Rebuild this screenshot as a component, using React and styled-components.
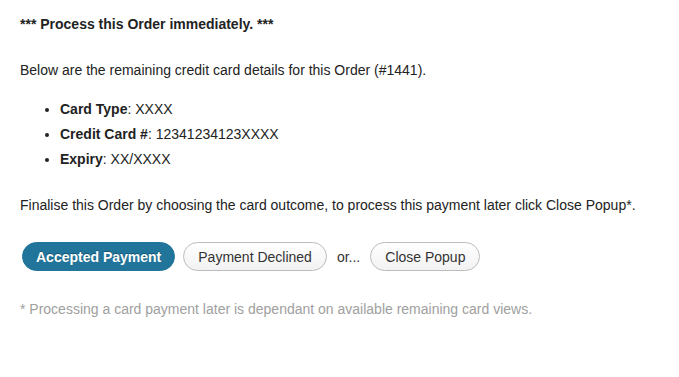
import React from "react";
import styled, { createGlobalStyle } from "styled-components";

const Global = createGlobalStyle`
  html, body { margin: 0; padding: 0; background: #fff; }
  body { font-family: "Liberation Sans", Arial, Helvetica, sans-serif; font-size: 14px; color: #222; }
`;

const Page = styled.div`
  padding: 15px 20px 20px 20px;
`;

const Title = styled.p`
  margin: 0;
  line-height: 18px;
  font-weight: bold;
`;

const Text = styled.p`
  margin: ${(p) => p.$top || 0}px 0 0 0;
  line-height: 18px;
`;

const List = styled.ul`
  margin: 21px 0 0 0;
  padding: 0 0 0 40px;
  list-style: disc;
`;

const Item = styled.li`
  line-height: 18px;
  & + & { margin-top: 7px; }
`;

const Actions = styled.div`
  display: flex;
  align-items: center;
  gap: 8px;
  margin: 28px 0 0 2px;
`;

const Button = styled.button`
  height: 29px;
  box-sizing: border-box;
  border-radius: 15px;
  padding: 0 ${(p) => (p.$primary ? 13 : 14)}px;
  font-family: inherit;
  font-size: 14px;
  cursor: pointer;
  background: ${(p) => (p.$primary ? "#21759b" : "linear-gradient(#ffffff, #f2f2f2)")};
  border: 1px solid ${(p) => (p.$primary ? "#21759b" : "#bcbcbc")};
  color: ${(p) => (p.$primary ? "#fff" : "#333")};
  font-weight: ${(p) => (p.$primary ? "bold" : "normal")};
  text-shadow: ${(p) => (p.$primary ? "0 -1px 0 rgba(0,0,0,0.3)" : "none")};
`;

const Or = styled.span`
  margin: 0 2px;
  color: #333;
`;

const Note = styled.p`
  margin: 29px 0 0 0;
  line-height: 18px;
  color: #a0a0a0;
`;

export default function App() {
  return (
    <Page>
      <Global />
      <Title>*** Process this Order immediately. ***</Title>
      <Text $top={28}>Below are the remaining credit card details for this Order (#1441).</Text>
      <List>
        <Item><strong>Card Type</strong>: XXXX</Item>
        <Item><strong>Credit Card #</strong>: 12341234123XXXX</Item>
        <Item><strong>Expiry</strong>: XX/XXXX</Item>
      </List>
      <Text $top={28}>Finalise this Order by choosing the card outcome, to process this payment later click Close Popup*.</Text>
      <Actions>
        <Button $primary>Accepted Payment</Button>
        <Button>Payment Declined</Button>
        <Or>or...</Or>
        <Button>Close Popup</Button>
      </Actions>
      <Note>* Processing a card payment later is dependant on available remaining card views.</Note>
    </Page>
  );
}
